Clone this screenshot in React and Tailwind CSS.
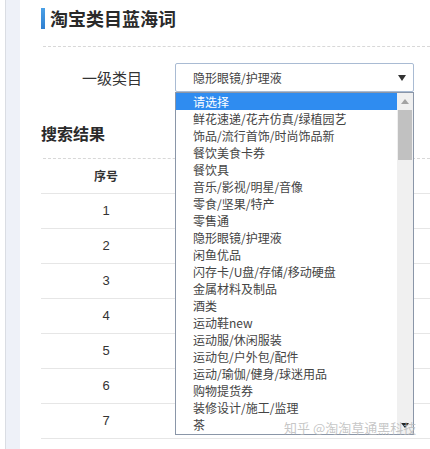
import React from "react";

const items = [
  "请选择",
  "鲜花速递/花卉仿真/绿植园艺",
  "饰品/流行首饰/时尚饰品新",
  "餐饮美食卡券",
  "餐饮具",
  "音乐/影视/明星/音像",
  "零食/坚果/特产",
  "零售通",
  "隐形眼镜/护理液",
  "闲鱼优品",
  "闪存卡/U盘/存储/移动硬盘",
  "金属材料及制品",
  "酒类",
  "运动鞋new",
  "运动服/休闲服装",
  "运动包/户外包/配件",
  "运动/瑜伽/健身/球迷用品",
  "购物提货券",
  "装修设计/施工/监理",
  "茶",
];

const font = { fontFamily: '"Noto Sans CJK SC", "Noto Sans", sans-serif' };

export default function App() {
  return (
    <div
      className="relative w-[430px] h-[449px] overflow-hidden flex bg-white text-[#333]"
      style={font}
    >
      {/* left strip */}
      <div className="w-[5px] h-full bg-white" />
      <div className="w-px h-full bg-[#dadde3]" />
      <div className="w-[14px] h-full bg-[#eef1f8]" />

      {/* content */}
      <div className="flex-1 flex flex-col pl-[21px]">
        <div className="mt-[8px] flex items-center h-[21px]">
          <div className="w-[4px] h-[21px] bg-gradient-to-b from-[#4aa0e6] to-[#2f7fd0]" />
          <div className="ml-[5px] text-[18px] font-bold leading-[21px] text-[#2a2a2a]">
            淘宝类目蓝海词
          </div>
        </div>
        <div className="mt-[17px] ml-[2px] border-t border-dashed border-[#d8d8d8]" />

        <div className="mt-[16px] flex items-center h-[29px]">
          <div className="w-[134px] pl-[41px] text-[15px] leading-[29px] text-[#333]">
            一级类目
          </div>
          <div className="w-[239px] h-[29px] border border-[#a9bbd3] rounded-[2px] flex items-center justify-between pl-[17px] pr-[7px] bg-white">
            <span className="text-[12px] text-[#444]">隐形眼镜/护理液</span>
            <svg width="8" height="6" viewBox="0 0 8 6">
              <path d="M0 0 L8 0 L4 6 Z" fill="#333" />
            </svg>
          </div>
        </div>

        <div className="mt-[30px] text-[16px] font-bold leading-[22px] text-[#2a2a2a]">
          搜索结果
        </div>
        <div className="mt-[14px] ml-[2px] border-t border-dashed border-[#d8d8d8]" />

        <div className="flex flex-col">
          <div className="h-[35px] flex items-center border-b border-[#e6e6e6]">
            <div className="w-[130px] text-center text-[12px] font-bold text-[#333]">序号</div>
          </div>
          {[1, 2, 3, 4, 5, 6, 7].map((n) => (
            <div key={n} className="h-[35px] flex items-center border-b border-[#e6e6e6]">
              <div
                className="w-[130px] text-center text-[13px] text-[#333]"
                style={{ fontFamily: '"Liberation Sans", Arial, sans-serif' }}
              >
                {n}
              </div>
            </div>
          ))}
        </div>
      </div>

      {/* open dropdown list */}
      <div className="absolute left-[175px] top-[92px] w-[239px] h-[343px] border border-[#8a96a8] bg-white flex">
        <div className="flex-1 flex flex-col">
          {items.map((t, i) => (
            <div
              key={t}
              className={
                i === 0
                  ? "h-[17px] leading-[17px] pl-[17px] text-[12px] bg-[#2f8cf0] text-white whitespace-nowrap"
                  : "h-[17px] leading-[17px] pl-[17px] text-[12px] text-[#444] whitespace-nowrap"
              }
            >
              {t}
            </div>
          ))}
        </div>
        <div className="w-[16px] h-full bg-[#f0f0f0] flex flex-col">
          <div className="h-[17px] flex items-center justify-center">
            <svg width="8" height="5" viewBox="0 0 8 5">
              <path d="M0 5 L8 5 L4 0 Z" fill="#a3a3a3" />
            </svg>
          </div>
          <div className="mx-[1px] h-[50px] bg-[#c1c1c1]" />
          <div className="flex-1" />
          <div className="h-[17px] flex items-center justify-center">
            <svg width="8" height="5" viewBox="0 0 8 5">
              <path d="M0 0 L8 0 L4 5 Z" fill="#222" />
            </svg>
          </div>
        </div>
      </div>

      {/* watermark */}
      <div className="absolute left-[284px] top-[419px] text-[13px] leading-[18px] text-[#b8b8b8]/80 whitespace-nowrap">
        知乎 @淘淘草通黑科技
      </div>
    </div>
  );
}
